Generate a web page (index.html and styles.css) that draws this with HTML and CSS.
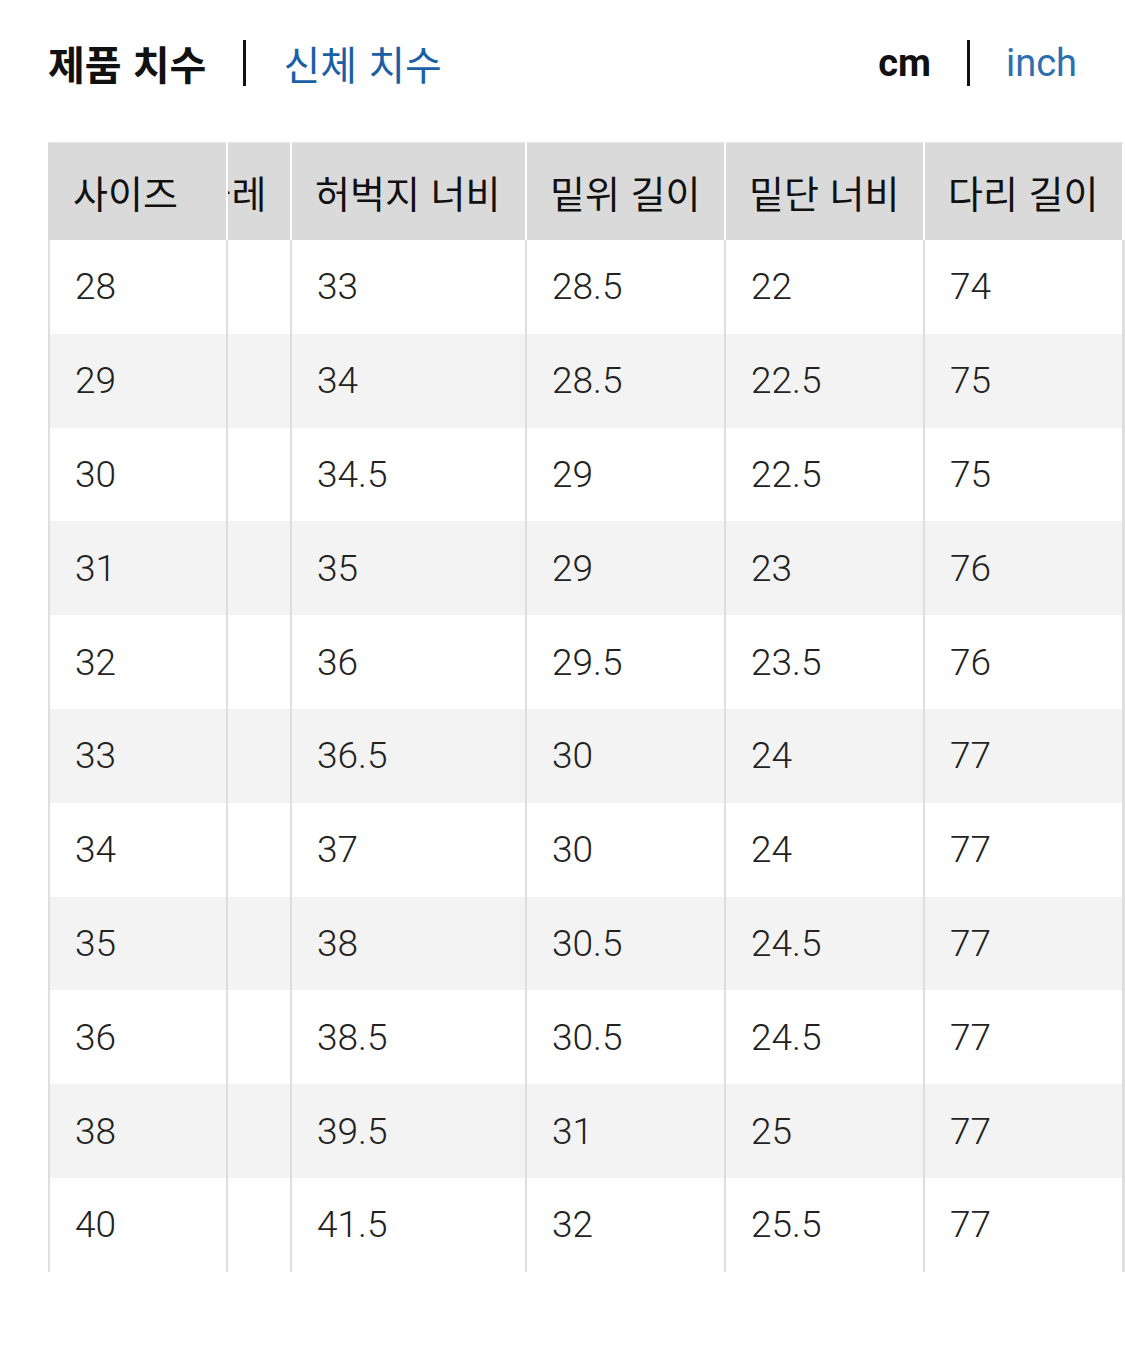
FILE: index.html
```html
<!DOCTYPE html>
<html lang="ko">
<head>
<meta charset="utf-8">
<title>사이즈 표</title>
<link rel="stylesheet" href="styles.css">
</head>
<body>
<div class="topbar">
  <div class="tabs">
    <span class="tab active">제품 치수</span>
    <span class="sep"></span>
    <span class="tab link">신체 치수</span>
  </div>
  <div class="units">
    <span class="unit active">cm</span>
    <span class="sep"></span>
    <span class="unit link">inch</span>
  </div>
</div>
<div class="size-chart">
  <table class="size-table fixed-col">
    <colgroup><col class="c-size"></colgroup>
    <thead><tr><th>사이즈</th></tr></thead>
    <tbody>
      <tr><td>28</td></tr>
      <tr class="alt"><td>29</td></tr>
      <tr><td>30</td></tr>
      <tr class="alt"><td>31</td></tr>
      <tr><td>32</td></tr>
      <tr class="alt"><td>33</td></tr>
      <tr><td>34</td></tr>
      <tr class="alt"><td>35</td></tr>
      <tr><td>36</td></tr>
      <tr class="alt"><td>38</td></tr>
      <tr><td>40</td></tr>
    </tbody>
  </table>
  <div class="scroll-area" id="wrap">
    <table class="size-table scroll-table">
      <colgroup>
        <col class="c-waist"><col class="c-thigh"><col class="c-rise"><col class="c-hem"><col class="c-leg">
      </colgroup>
      <thead>
        <tr><th>허리 둘레</th><th>허벅지 너비</th><th>밑위 길이</th><th>밑단 너비</th><th>다리 길이</th></tr>
      </thead>
      <tbody>
        <tr><td></td><td>33</td><td>28.5</td><td>22</td><td>74</td></tr>
        <tr class="alt"><td></td><td>34</td><td>28.5</td><td>22.5</td><td>75</td></tr>
        <tr><td></td><td>34.5</td><td>29</td><td>22.5</td><td>75</td></tr>
        <tr class="alt"><td></td><td>35</td><td>29</td><td>23</td><td>76</td></tr>
        <tr><td></td><td>36</td><td>29.5</td><td>23.5</td><td>76</td></tr>
        <tr class="alt"><td></td><td>36.5</td><td>30</td><td>24</td><td>77</td></tr>
        <tr><td></td><td>37</td><td>30</td><td>24</td><td>77</td></tr>
        <tr class="alt"><td></td><td>38</td><td>30.5</td><td>24.5</td><td>77</td></tr>
        <tr><td></td><td>38.5</td><td>30.5</td><td>24.5</td><td>77</td></tr>
        <tr class="alt"><td></td><td>39.5</td><td>31</td><td>25</td><td>77</td></tr>
        <tr><td></td><td>41.5</td><td>32</td><td>25.5</td><td>77</td></tr>
      </tbody>
    </table>
  </div>
</div>
<script src="script.js"></script>
</body>
</html>
```

FILE: styles.css
```css
html, body {
  margin: 0;
  padding: 0;
  background: #fff;
}

body {
  font-family: "Noto Sans CJK KR", "Roboto", sans-serif;
  color: #111;
}

.topbar {
  height: 126px;
  padding: 0 48px;
  display: flex;
  align-items: center;
  justify-content: space-between;
}

.tabs, .units {
  display: flex;
  align-items: center;
  gap: 37px;
}

.tab {
  font-family: "Noto Sans CJK KR", sans-serif;
  font-size: 40px;
  line-height: 1;
}

.tab.active {
  font-weight: 700;
  color: #111;
}

.tab.link {
  color: #1a5fa6;
  font-weight: 400;
}

.sep {
  display: block;
  width: 3px;
  height: 46px;
  background: #111;
}

.units {
  gap: 36px;
}

.unit {
  font-family: "Roboto", sans-serif;
  font-size: 38px;
  line-height: 1;
}

.unit.active {
  font-weight: 700;
  color: #111;
}

.unit.link {
  font-weight: 400;
  color: #2e6fae;
}

.size-chart {
  display: flex;
  margin: 16px 0 0 48px;
}

.scroll-area {
  flex: 0 0 897px;
  overflow-x: auto;
  scrollbar-width: none;
}

.scroll-area::-webkit-scrollbar {
  display: none;
}

.size-table {
  border-collapse: separate;
  border-spacing: 0;
  table-layout: fixed;
  flex: none;
}

.fixed-col { width: 180px; }
.scroll-table { width: 1032px; }

.c-size { width: 180px; }
.c-waist { width: 199px; }
.c-thigh { width: 235px; }
.c-rise { width: 199px; }
.c-hem { width: 199px; }
.c-leg { width: 200px; }

.size-table th,
.size-table td {
  text-align: left;
  white-space: nowrap;
  overflow: hidden;
  border-right: 2px solid #dedede;
}

.size-table th {
  height: 98px;
  box-sizing: border-box;
  padding: 0 0 0 23px;
  background: #dadada;
  border-top: 1px solid #e6e6e6;
  border-right-color: #fff;
  font-family: "Noto Sans CJK KR", sans-serif;
  font-weight: 400;
  font-size: 38px;
  color: #111;
}

.size-table td {
  height: 93.8px;
  box-sizing: border-box;
  padding: 0 0 0 25px;
  background: #fff;
  font-family: "Roboto", sans-serif;
  font-weight: 300;
  font-size: 37px;
  color: #222;
}

.size-table tr.alt td {
  background: #f3f3f3;
}

.fixed-col td {
  border-left: 2px solid #dedede;
}

.fixed-col th {
  border-left: 2px solid #dadada;
}

.scroll-table th:last-child,
.scroll-table td:last-child {
  border-right-width: 3px;
}
```

FILE: script.js
```js
var wrap = document.getElementById('wrap');
wrap.scrollLeft = wrap.scrollWidth;
```
